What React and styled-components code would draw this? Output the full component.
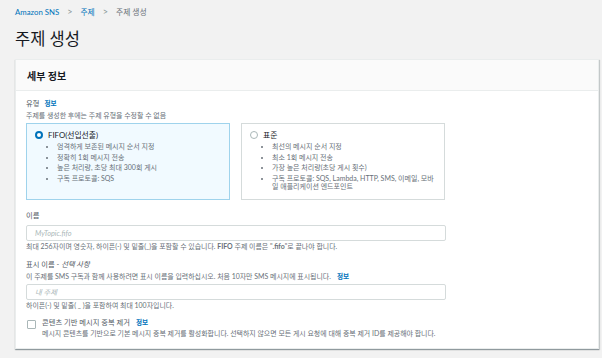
import styled, { createGlobalStyle } from "styled-components";

const Global = createGlobalStyle`
  html, body {
    margin: 0;
    padding: 0;
    background: #f2f2f2;
    font-family: Lato, "Noto Sans CJK KR", sans-serif;
    color: #16191f;
  }
`;

const Page = styled.div`
  padding: 6px 3px 6px 15px;
`;

const Crumbs = styled.nav`
  display: flex;
  align-items: center;
  gap: 8px;
  height: 12px;
  font-size: 7.8px;
  line-height: 12px;
`;

const Crumb = styled.span`
  color: ${(p) => (p.$link ? "#0073bb" : "#687078")};
`;

const Sep = styled.span`
  color: #879596;
  font-size: 9px;
`;

const Title = styled.h1`
  margin: 10px 0 0;
  font-size: 16.5px;
  font-weight: 400;
  line-height: 22px;
  color: #16191f;
`;

const Card = styled.section`
  margin-top: 9px;
  background: #fff;
  border: 1px solid #eaeded;
  box-shadow: 0 1px 1px rgba(0, 28, 36, 0.3), 1px 1px 1px rgba(0, 28, 36, 0.15);
`;

const CardHeader = styled.header`
  height: 30px;
  display: flex;
  align-items: center;
  padding: 0 11px;
  background: #fafafa;
  border-bottom: 1px solid #eaeded;
  font-size: 10px;
  font-weight: 700;
`;

const CardBody = styled.div`
  padding: 6px 10px 10px;
  width: 420px;
`;

const Label = styled.div`
  font-size: 7.3px;
  line-height: 12px;
  color: #545b64;
  margin-top: ${(p) => p.$mt || 0}px;
  display: flex;
  align-items: baseline;
  gap: 5px;
`;

const Optional = styled.i`
  font-style: italic;
`;

const Info = styled.span`
  color: #0073bb;
  font-weight: 700;
  font-size: 6.6px;
`;

const Help = styled.div`
  font-size: 6.95px;
  line-height: 10px;
  color: #687078;
  white-space: nowrap;
  display: flex;
  gap: 6px;
  align-items: baseline;

  b {
    font-weight: 700;
  }
`;

const Tiles = styled.div`
  display: grid;
  grid-template-columns: 204px 204px;
  gap: 11px;
  margin-top: 3px;
`;

const Tile = styled.div`
  height: 77px;
  box-sizing: border-box;
  padding: 5px 9px 0 8px;
  border: 1px solid ${(p) => (p.$selected ? "#9fd3ec" : "#d5dbdb")};
  background: ${(p) => (p.$selected ? "#f1faff" : "#fff")};
`;

const TileHead = styled.div`
  display: flex;
  align-items: center;
  gap: 5px;
  font-size: 7.8px;
  line-height: 12px;
  color: #16191f;
`;

const Radio = styled.span`
  width: 8px;
  height: 8px;
  box-sizing: border-box;
  border-radius: 50%;
  border: ${(p) => (p.$on ? "2.5px solid #0073bb" : "1px solid #aab7b8")};
  background: #fff;
  flex: none;
`;

const Bullets = styled.ul`
  margin: 2px 0 0;
  padding: 0 0 0 22px;
  list-style: disc;
  font-size: 7px;
  line-height: 7.5px;
  color: #687078;

  li {
    margin-bottom: 3.2px;
  }
`;

const Input = styled.div`
  margin-top: 3px;
  height: 16px;
  box-sizing: border-box;
  border: 1px solid #d5dbdb;
  border-radius: 2px;
  padding: 0 8px;
  display: flex;
  align-items: center;
  font-size: 7.3px;
  font-style: italic;
  color: #aab7b8;
`;

const CheckRow = styled.div`
  display: flex;
  gap: 6px;
  margin-top: 7px;
  padding-left: 1px;
`;

const Box = styled.span`
  width: 7px;
  height: 7px;
  margin-top: 3px;
  border: 1px solid #aab7b8;
  border-radius: 1px;
  background: #fff;
  flex: none;
`;

const CheckLabel = styled.div`
  font-size: 7.3px;
  line-height: 11px;
  color: #545b64;
  display: flex;
  gap: 6px;
  align-items: baseline;
`;

export default function App() {
  return (
    <Page>
      <Global />
      <Crumbs>
        <Crumb $link>Amazon SNS</Crumb>
        <Sep>&gt;</Sep>
        <Crumb $link>주제</Crumb>
        <Sep>&gt;</Sep>
        <Crumb>주제 생성</Crumb>
      </Crumbs>
      <Title>주제 생성</Title>
      <Card>
        <CardHeader>세부 정보</CardHeader>
        <CardBody>
          <Label>
            유형 <Info>정보</Info>
          </Label>
          <Help>주제를 생성한 후에는 주제 유형을 수정할 수 없음</Help>
          <Tiles>
            <Tile $selected>
              <TileHead>
                <Radio $on />
                FIFO(선입선출)
              </TileHead>
              <Bullets>
                <li>엄격하게 보존된 메시지 순서 지정</li>
                <li>정확히 1회 메시지 전송</li>
                <li>높은 처리량, 초당 최대 300회 게시</li>
                <li>구독 프로토콜: SQS</li>
              </Bullets>
            </Tile>
            <Tile>
              <TileHead>
                <Radio />
                표준
              </TileHead>
              <Bullets>
                <li>최선의 메시지 순서 지정</li>
                <li>최소 1회 메시지 전송</li>
                <li>가장 높은 처리량(초당 게시 횟수)</li>
                <li>구독 프로토콜: SQS, Lambda, HTTP, SMS, 이메일, 모바일 애플리케이션 엔드포인트</li>
              </Bullets>
            </Tile>
          </Tiles>

          <Label $mt={10}>이름</Label>
          <Input>MyTopic.fifo</Input>
          <Help>
            <span>
              최대 256자이며 영숫자, 하이픈(-) 및 밑줄(_)을 포함할 수 있습니다. <b>FIFO</b> 주제 이름은 "<b>.fifo</b>"로 끝나야 합니다.
            </span>
          </Help>

          <Label $mt={8}>
            <span>
              표시 이름 - <Optional>선택 사항</Optional>
            </span>
          </Label>
          <Help>
            이 주제를 SMS 구독과 함께 사용하려면 표시 이름을 입력하십시오. 처음 10자만 SMS 메시지에 표시됩니다.
            <Info>정보</Info>
          </Help>
          <Input>내 주제</Input>
          <Help>하이픈(-) 및 밑줄( _ )을 포함하여 최대 100자입니다.</Help>

          <CheckRow>
            <Box />
            <div>
              <CheckLabel>
                콘텐츠 기반 메시지 중복 제거 <Info>정보</Info>
              </CheckLabel>
              <Help>
                메시지 콘텐츠를 기반으로 기본 메시지 중복 제거를 활성화합니다. 선택하지 않으면 모든 게시 요청에 대해 중복 제거 ID를 제공해야 합니다.
              </Help>
            </div>
          </CheckRow>
        </CardBody>
      </Card>
    </Page>
  );
}
